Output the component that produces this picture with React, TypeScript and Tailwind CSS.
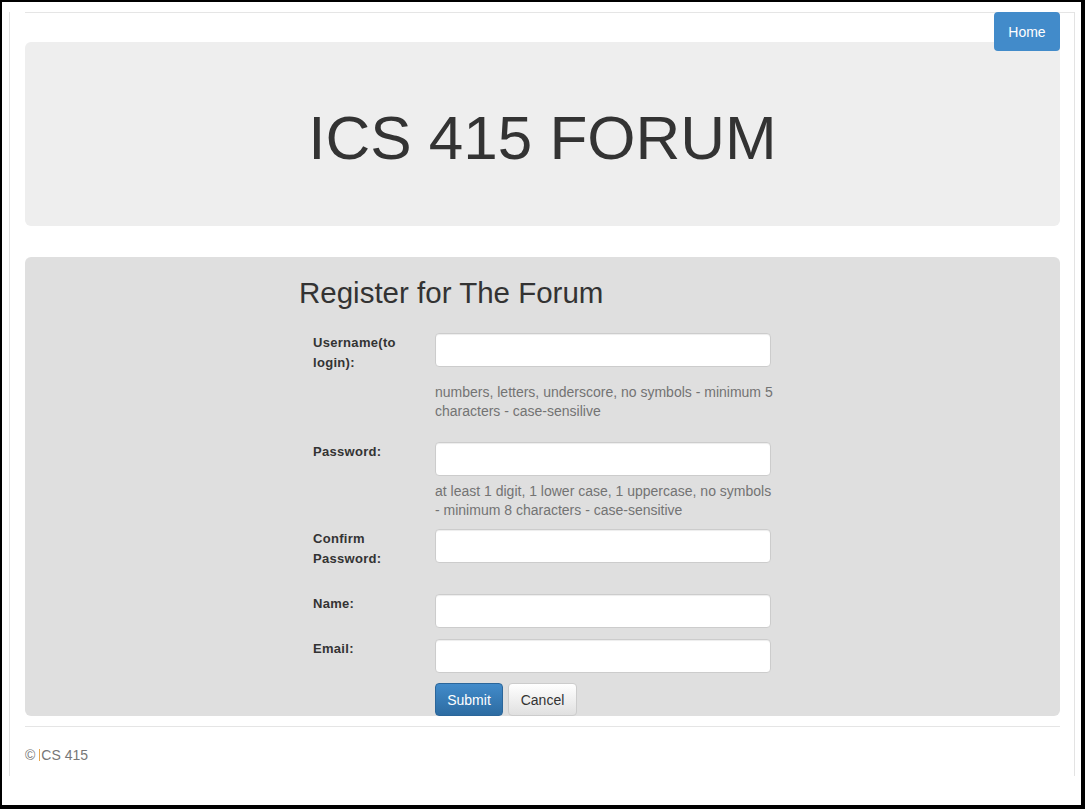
import React from 'react';

const font = { fontFamily: '"Liberation Sans", Arial, sans-serif' };

const Label = ({ children }: { children: React.ReactNode }) => (
  <label className="w-[136px] shrink-0 pl-[14px] pr-2 text-[13px] font-bold leading-[20px] tracking-[0.3px] text-[#333]">
    {children}
  </label>
);

const Field = ({ type = 'text' }: { type?: string }) => (
  <input
    type={type}
    className="h-[34px] w-[336px] rounded-[4px] border border-[#ccc] bg-white px-3 text-sm shadow-[inset_0_1px_1px_rgba(0,0,0,0.075)] outline-none"
  />
);

const Help = ({ children }: { children: React.ReactNode }) => (
  <p className="ml-[136px] w-[340px] text-sm leading-[19px] text-[#737373]">{children}</p>
);

export default function App() {
  return (
    <div className="min-h-[809px] w-[1085px] bg-black pt-[2px] pl-[2px] pr-[4px] pb-[4px]" style={font}>
      <div className="relative h-[803px] w-[1079px] bg-white pt-[10px] pl-[7px]">
        <div className="h-[764px] w-[1066px] border-x border-[#e3e3e3] pl-[15px] pr-[14px]">
          {/* top rule */}
          <div className="-mr-[14px] border-t border-[#e5e5e5]" />

          {/* nav button */}
          <button className="absolute right-[21px] top-[10px] h-[39px] w-[66px] rounded-[4px] bg-[#428bca] text-sm text-white">
            Home
          </button>

          {/* jumbotron */}
          <div className="mt-[29px] flex h-[184px] items-center justify-center rounded-[6px] bg-[#eeeeee]">
            <h1 className="mt-[8px] text-[62px] leading-[1.1] text-[#333]">ICS 415 FORUM</h1>
          </div>

          {/* register panel */}
          <div className="mt-[31px] h-[459px] rounded-[6px] bg-[#dfdfdf] pl-[274px] pt-[19px]">
            <h2 className="text-[29.5px] leading-[33px] text-[#333]">Register for The Forum</h2>

            <div className="mt-[24px] flex">
              <Label>
                Username(to
                <br />
                login):
              </Label>
              <Field />
            </div>
            <Help>
              <span className="mt-[10px] block">numbers, letters, underscore, no symbols - minimum 5 characters - case-sensilive</span>
            </Help>

            <div className="mt-[21px] flex">
              <Label>Password:</Label>
              <Field type="password" />
            </div>
            <Help>
              <span className="mt-[6px] block">at least 1 digit, 1 lower case, 1 uppercase, no symbols - minimum 8 characters - case-sensitive</span>
            </Help>

            <div className="mt-[9px] flex">
              <Label>
                Confirm
                <br />
                Password:
              </Label>
              <Field type="password" />
            </div>

            <div className="mt-[25px] flex">
              <Label>Name:</Label>
              <Field />
            </div>

            <div className="mt-[11px] flex">
              <Label>Email:</Label>
              <Field type="email" />
            </div>

            <div className="ml-[136px] mt-[10px] flex gap-[5px]">
              <button className="h-[33px] w-[68px] rounded-[4px] border border-[#2b669a] bg-gradient-to-b from-[#428bca] to-[#2d6ca2] text-sm text-white">
                Submit
              </button>
              <button className="h-[33px] w-[69px] rounded-[4px] border border-[#ccc] bg-gradient-to-b from-white to-[#e0e0e0] text-sm text-[#333]">
                Cancel
              </button>
            </div>
          </div>

          {/* footer */}
          <div className="mt-[10px] border-t border-[#e5e5e5]" />
          <p className="mt-[18px] flex items-center text-sm text-[#777]">
            © <span className="ml-[4px] mr-[1px] inline-block h-[12px] w-px bg-[#e8a850]" />CS 415
          </p>
        </div>
      </div>
    </div>
  );
}
